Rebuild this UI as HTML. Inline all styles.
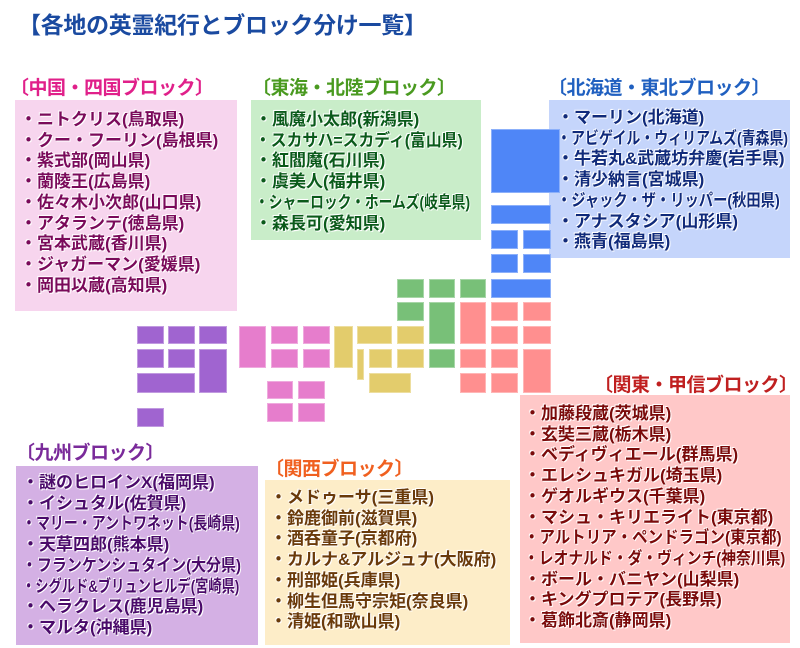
<!DOCTYPE html>
<html><head><meta charset="utf-8"><style>
body{margin:0;width:800px;height:648px;background:#fff;position:relative;overflow:hidden;font-family:"Liberation Sans","Noto Sans CJK JP",sans-serif;}
.p{position:absolute;}
.r{position:absolute;box-sizing:border-box;border:1px solid rgba(255,255,255,.35);}
.h{position:absolute;font-size:19px;font-weight:bold;white-space:nowrap;letter-spacing:-0.5px;}
.l{position:absolute;font-size:17px;font-weight:bold;line-height:20.7px;white-space:nowrap;letter-spacing:0;text-shadow:0 0 2px #fff,0 0 1px #fff,1px 1px 0 #fff,-1px -1px 0 #fff;}
.s{display:inline-block;transform-origin:0 50%;}
</style></head><body>
<div class="h" style="left:18px;top:6px;font-size:23px;color:#1a4aa0;letter-spacing:-0.3px">【各地の英霊紀行とブロック分け一覧】</div>

<div class="p" style="left:15px;top:100px;width:222px;height:211px;background:#f7d5ee"></div>
<div class="p" style="left:251px;top:100px;width:230px;height:140px;background:#c9edc9"></div>
<div class="p" style="left:549px;top:100px;width:241px;height:158px;background:#c5d5fb"></div>
<div class="p" style="left:520px;top:395px;width:270px;height:248px;background:#ffc8c8"></div>
<div class="p" style="left:16px;top:466px;width:242px;height:179px;background:#d4b0e4"></div>
<div class="p" style="left:265px;top:480px;width:245px;height:165px;background:#fdedc8"></div>

<div class="r" style="left:491px;top:129px;width:69px;height:64px;background:#4f86f7"></div>
<div class="r" style="left:491px;top:205px;width:60px;height:19px;background:#4f86f7"></div>
<div class="r" style="left:491px;top:230px;width:27px;height:19px;background:#4f86f7"></div>
<div class="r" style="left:523px;top:230px;width:28px;height:19px;background:#4f86f7"></div>
<div class="r" style="left:491px;top:254px;width:27px;height:19px;background:#4f86f7"></div>
<div class="r" style="left:523px;top:254px;width:28px;height:19px;background:#4f86f7"></div>
<div class="r" style="left:491px;top:279px;width:60px;height:19px;background:#4f86f7"></div>

<div class="r" style="left:397px;top:279px;width:27px;height:19px;background:#78c078"></div>
<div class="r" style="left:429px;top:279px;width:26px;height:19px;background:#78c078"></div>
<div class="r" style="left:460px;top:279px;width:26px;height:19px;background:#78c078"></div>
<div class="r" style="left:397px;top:302px;width:27px;height:19px;background:#78c078"></div>
<div class="r" style="left:429px;top:302px;width:26px;height:42px;background:#78c078"></div>
<div class="r" style="left:429px;top:349px;width:26px;height:19px;background:#78c078"></div>

<div class="r" style="left:460px;top:302px;width:26px;height:42px;background:#ff8f8f"></div>
<div class="r" style="left:491px;top:302px;width:27px;height:19px;background:#ff8f8f"></div>
<div class="r" style="left:523px;top:302px;width:28px;height:19px;background:#ff8f8f"></div>
<div class="r" style="left:491px;top:326px;width:27px;height:18px;background:#ff8f8f"></div>
<div class="r" style="left:523px;top:326px;width:28px;height:18px;background:#ff8f8f"></div>
<div class="r" style="left:460px;top:349px;width:26px;height:19px;background:#ff8f8f"></div>
<div class="r" style="left:491px;top:349px;width:27px;height:19px;background:#ff8f8f"></div>
<div class="r" style="left:523px;top:349px;width:28px;height:44px;background:#ff8f8f"></div>
<div class="r" style="left:460px;top:373px;width:26px;height:20px;background:#ff8f8f"></div>
<div class="r" style="left:491px;top:373px;width:27px;height:20px;background:#ff8f8f"></div>

<div class="r" style="left:334px;top:326px;width:19px;height:42px;background:#e3cc6c"></div>
<div class="r" style="left:357px;top:326px;width:35px;height:18px;background:#e3cc6c"></div>
<div class="r" style="left:397px;top:326px;width:27px;height:18px;background:#e3cc6c"></div>
<div class="r" style="left:357px;top:349px;width:7px;height:31px;background:#e3cc6c"></div>
<div class="r" style="left:369px;top:349px;width:23px;height:19px;background:#e3cc6c"></div>
<div class="r" style="left:397px;top:349px;width:27px;height:19px;background:#e3cc6c"></div>
<div class="r" style="left:369px;top:373px;width:42px;height:20px;background:#e3cc6c"></div>

<div class="r" style="left:239px;top:326px;width:27px;height:42px;background:#e67dcc"></div>
<div class="r" style="left:271px;top:326px;width:27px;height:18px;background:#e67dcc"></div>
<div class="r" style="left:303px;top:326px;width:27px;height:18px;background:#e67dcc"></div>
<div class="r" style="left:271px;top:349px;width:27px;height:19px;background:#e67dcc"></div>
<div class="r" style="left:303px;top:349px;width:27px;height:19px;background:#e67dcc"></div>
<div class="r" style="left:267px;top:381px;width:26px;height:18px;background:#e67dcc"></div>
<div class="r" style="left:298px;top:381px;width:27px;height:18px;background:#e67dcc"></div>
<div class="r" style="left:267px;top:403px;width:26px;height:19px;background:#e67dcc"></div>
<div class="r" style="left:298px;top:403px;width:27px;height:19px;background:#e67dcc"></div>

<div class="r" style="left:137px;top:326px;width:27px;height:18px;background:#a064d0"></div>
<div class="r" style="left:168px;top:326px;width:27px;height:18px;background:#a064d0"></div>
<div class="r" style="left:199px;top:326px;width:28px;height:18px;background:#a064d0"></div>
<div class="r" style="left:137px;top:349px;width:27px;height:19px;background:#a064d0"></div>
<div class="r" style="left:168px;top:349px;width:27px;height:19px;background:#a064d0"></div>
<div class="r" style="left:199px;top:349px;width:28px;height:44px;background:#a064d0"></div>
<div class="r" style="left:137px;top:373px;width:58px;height:20px;background:#a064d0"></div>
<div class="r" style="left:137px;top:408px;width:27px;height:19px;background:#a064d0"></div>

<div class="h" style="left:10px;top:73px;color:#e0208a">〔中国・四国ブロック〕</div>
<div class="h" style="left:252px;top:73px;color:#4a9a20">〔東海・北陸ブロック〕</div>
<div class="h" style="left:548px;top:73px;color:#2060c0">〔北海道・東北ブロック〕</div>
<div class="h" style="left:594px;top:370px;color:#c02020">〔関東・甲信ブロック〕</div>
<div class="h" style="left:16px;top:438px;color:#7a2a9a">〔九州ブロック〕</div>
<div class="h" style="left:265px;top:454px;color:#f06020">〔関西ブロック〕</div>

<div class="l" style="left:20px;top:110px;color:#7a0a5a">・ニトクリス(鳥取県)<br>・クー・フーリン(島根県)<br>・紫式部(岡山県)<br>・蘭陵王(広島県)<br>・佐々木小次郎(山口県)<br>・アタランテ(徳島県)<br>・宮本武蔵(香川県)<br>・ジャガーマン(愛媛県)<br>・岡田以蔵(高知県)</div>

<div class="l" style="left:255px;top:110px;color:#0a5a1a">・風魔小太郎(新潟県)<br><span class="s" style="transform:scaleX(.93)">・スカサハ=スカディ(富山県)</span><br>・紅閻魔(石川県)<br>・虞美人(福井県)<br><span class="s" style="transform:scaleX(.81)">・シャーロック・ホームズ(岐阜県)</span><br>・森長可(愛知県)</div>

<div class="l" style="left:557px;top:108px;color:#102a7a">・マーリン(北海道)<br><span class="s" style="transform:scaleX(.82)">・アビゲイル・ウィリアムズ(青森県)</span><br>・牛若丸&amp;武蔵坊弁慶(岩手県)<br>・清少納言(宮城県)<br><span class="s" style="transform:scaleX(.84)">・ジャック・ザ・リッパー(秋田県)</span><br>・アナスタシア(山形県)<br>・燕青(福島県)</div>

<div class="l" style="left:524px;top:404px;color:#7a0a0a">・加藤段蔵(茨城県)<br>・玄奘三蔵(栃木県)<br>・ベディヴィエール(群馬県)<br>・エレシュキガル(埼玉県)<br>・ゲオルギウス(千葉県)<br>・マシュ・キリエライト(東京都)<br><span class="s" style="transform:scaleX(.91)">・アルトリア・ペンドラゴン(東京都)</span><br><span class="s" style="transform:scaleX(.87)">・レオナルド・ダ・ヴィンチ(神奈川県)</span><br>・ボール・バニヤン(山梨県)<br>・キングプロテア(長野県)<br>・葛飾北斎(静岡県)</div>

<div class="l" style="left:22px;top:473px;color:#4a0a6a">・謎のヒロインX(福岡県)<br>・イシュタル(佐賀県)<br><span class="s" style="transform:scaleX(.82)">・マリー・アントワネット(長崎県)</span><br>・天草四郎(熊本県)<br><span class="s" style="transform:scaleX(.88)">・フランケンシュタイン(大分県)</span><br><span class="s" style="transform:scaleX(.78)">・シグルド&amp;ブリュンヒルデ(宮崎県)</span><br>・ヘラクレス(鹿児島県)<br>・マルタ(沖縄県)</div>

<div class="l" style="left:270px;top:488px;color:#6a3a0a">・メドゥーサ(三重県)<br>・鈴鹿御前(滋賀県)<br>・酒呑童子(京都府)<br>・カルナ&amp;アルジュナ(大阪府)<br>・刑部姫(兵庫県)<br>・柳生但馬守宗矩(奈良県)<br>・清姫(和歌山県)</div>
</body></html>
